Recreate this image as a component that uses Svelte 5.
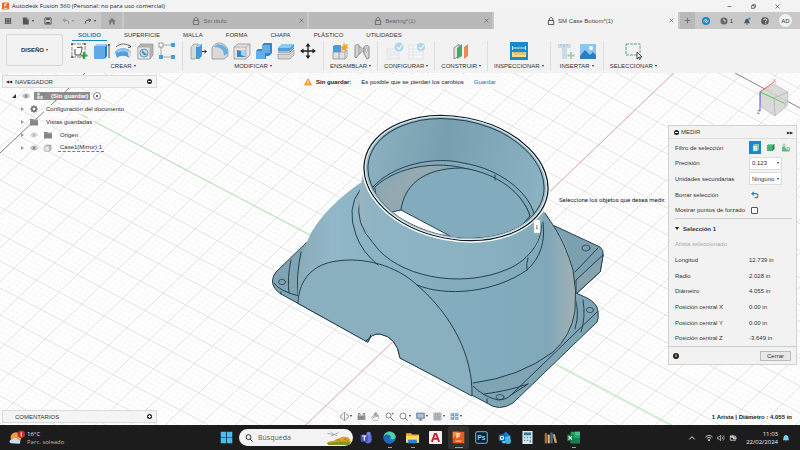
<script>
  const ribbonTabs = ['SOLIDO', 'SUPERFICIE', 'MALLA', 'FORMA', 'CHAPA', 'PLÁSTICO', 'UTILIDADES'];

  const icons = {
    sketch: '<rect x="2" y="2" width="13" height="13" fill="#fff" stroke="#666" stroke-width=".8" stroke-dasharray="4 1"/><path d="M5 13V7M5 13H10C12 10 12 7 12 5L7 5.500" fill="none" stroke="#444"/><circle cx="2" cy="2" r="1" fill="#555"/><circle cx="15" cy="2" r="1" fill="#555"/><circle cx="2" cy="15" r="1" fill="#555"/><path d="M14 10v7M10.500 13.500h7" stroke="#2aa34a" stroke-width="2"/>',
    extrude: '<path d="M2 5l2-3h11l-2 3z" fill="#9bcdf3"/><rect x="2" y="4" width="11" height="13" rx="1" fill="#5fa9e6"/><path d="M13 5l2-3v12l-2 3z" fill="#2f79bd"/><path d="M17 16V2M16 4l1-2 1 2" stroke="#333" fill="none" stroke-width=".8"/>',
    revolve: '<path d="M1 10C4 5 14 5 17 10l-2 6c-3-3-9-3-12 0z" fill="#4d9edc"/><path d="M1 10C4 5 14 5 17 10l-3 1c-3-2-7-2-10 0z" fill="#8cc6ef"/><path d="M2 5C6 1 13 1 17 5M15 2.500l2 2.500-3 .5" stroke="#444" fill="none" stroke-width=".8"/><ellipse cx="15.500" cy="12" rx="1.500" ry="3" fill="#d8d8d8"/>',
    hole: '<path d="M2 5l3-3h12v11l-3 4H2z" fill="#b5b5b5" stroke="#888" stroke-width=".6"/><rect x="2" y="5" width="12" height="12" rx="1" fill="#e2e2e2" stroke="#999" stroke-width=".6"/><circle cx="8" cy="11" r="4" fill="#b9ddf6" stroke="#54788e" stroke-width=".7"/><path d="M6 8a4 4 0 005 5z" fill="#3489ca"/>',
    pattern: '<path d="M3 3h12M3 3v12h12" stroke="#999" stroke-width=".8" fill="none"/><rect x="1" y="1" width="4" height="4" fill="#fff" stroke="#777" stroke-width=".7"/><g fill="#4c9bd8"><rect x="13" y="1" width="4" height="4"/><rect x="1" y="13" width="4" height="4"/><rect x="13" y="13" width="4" height="4"/></g>',
    press: '<path d="M2 5l3-3h4v11l-3 4H2z" fill="#d9d9d9" stroke="#888" stroke-width=".6"/><path d="M7 5l3-3h3v12l-3 3H7z" fill="#459ada"/><path d="M7 5l3-3h3l-3 3z" fill="#9cd0f4"/><path d="M13 9.500h4M15.500 8l2 1.500-2 1.500" stroke="#333" fill="none"/>',
    fillet: '<path d="M1 17V7C1 4 5 1 8 1c5 0 9 4 9 9v4l-4 3z" fill="#d9d9d9" stroke="#888" stroke-width=".7"/><path d="M5 3c7-2 12 3 12 8l-4 3c0-6-3-9-10-9z" fill="#67afe4"/>',
    shell: '<path d="M1 5l4-3h12v11l-4 4H1z" fill="#e3e3e3" stroke="#888" stroke-width=".7"/><path d="M4 8h9v7H4z" fill="#a8d4f2"/><path d="M4 8l4 1v4l5 2H4z" fill="#3388ca"/><path d="M13 5l4-3M1 5h12v12" fill="none" stroke="#999" stroke-width=".6"/>',
    combine: '<path d="M7 3l2-2h8v10l-3 3h-3v3H1V9l2-2h4z" fill="#3386cb"/><path d="M7 3h8v8h-5v6H1V9h6z" fill="#64aee5"/>',
    split: '<path d="M1 6l4-4h12v3l-4 4H1z" fill="#4f9fde"/><path d="M1 6l4-4h12l-4 4z" fill="#8fc8f1"/><path d="M1 12h12l4-4v5l-4 4H1z" fill="#d4d4d4" stroke="#888" stroke-width=".6"/><path d="M1 10h12l4-4" fill="none" stroke="#777"/>',
    move: '<path d="M9 2v14M2 9h14" stroke="#222" stroke-width="1.300"/><path d="M9 1l2.500 3.500h-5zM9 17l2.500-3.500h-5zM1 9l3.500-2.500v5zM17 9l-3.500-2.500v5z" fill="#222"/>',
    newcomp: '<path d="M2 10h12v7H2z" fill="#e0e0e0" stroke="#888" stroke-width=".7"/><path d="M2 4l2-1h6v7H2z" fill="#4c9bdc"/><path d="M8 10v7M14 10l2-2v7l-2 2" stroke="#888" fill="none" stroke-width=".7"/><path d="M13 0l1 3 3-1-1 3 2 1-3 1v3l-2-2-3 1 1-3-2-1 3-1z" fill="#efa82d"/>',
    joint: '<path d="M2 4c1-2 4-2 4 0v8l-3 4-1-1z" fill="#d3d6d8" stroke="#777" stroke-width=".8"/><path d="M6 5h2v6l-2 1M11 6h-1v4h1" fill="none" stroke="#777" stroke-width=".8"/><path d="M11 5c1-2 5-2 5 0v11l-2 1-3-5z" fill="#d3d6d8" stroke="#777" stroke-width=".8"/><ellipse cx="13.500" cy="8" rx="1" ry="2" fill="#fff" stroke="#888" stroke-width=".6"/>',
    config: '<g opacity=".45"><path d="M1 7h12v10H1zM3 10h8M3 13h8" fill="#eee" stroke="#d0d3d6"/><circle cx="13" cy="5" r="4.500" fill="#61b3de"/><path d="M11 5l2 2 3-4" stroke="#fff" fill="none" stroke-width="1.200"/></g>',
    configTable: '<g opacity=".45"><path d="M1 3h14v14H1zM1 7h14M1 10h14M1 13h14M5 3v14" fill="#fff" stroke="#d3d6d8"/><circle cx="13" cy="5" r="4" fill="#61b3de"/><path d="M11 5l2 2 3-4" stroke="#fff" fill="none" stroke-width="1.200"/></g>',
    plane: '<path d="M2 6l5-4v12l-5 3z" fill="#e8e8e8" stroke="#777" stroke-width=".8"/><path d="M5 6l5-4v12l-5 3z" fill="#45a96b"/><path d="M12 5l4-3v12l-4 3z" fill="#ee8957"/>',
    measure: '<rect width="18" height="18" fill="#188bcf"/><rect x="2" y="10" width="14" height="5" fill="#fbdb8b"/><path d="M4 10v2M6 10v3M8 10v2M10 10v3M12 10v2M14 10v3" stroke="#987b38" stroke-width=".6"/><path d="M2.500 4v4M15.500 4v4M3 6h12" stroke="#fff" stroke-width=".8"/>',
    insert: '<path d="M1 2h13v4h-4v11H5V6H1z" fill="#cbdce6"/><path d="M4 2v2M7 2v3M10 2v2" stroke="#a5bac6"/><path d="M14 10v7M10.500 13.500h7" stroke="#a8cda9" stroke-width="1.800"/>',
    picture: '<rect x="1" y="2" width="16" height="15" fill="#8bc6f1"/><circle cx="12" cy="6" r="2" fill="#fff"/><path d="M1 14l5-6 5 5 3-3 3 3v4H1z" fill="#2680c2"/>',
    select: '<rect x="2" y="2" width="14" height="11" fill="none" stroke="#57a980" stroke-dasharray="3 1"/><path d="M13 10l5 5h-2.500l1 2-1 .6-1-2.200L13 17z" fill="#fff" stroke="#222" stroke-width=".8"/>',
    apps: '<g fill="#555"><path d="M2 2h4v4H2zM7 2h4v4H7zM12 2h4v4h-4zM2 7h4v4H2zM7 7h4v4H7zM12 7h4v4h-4zM2 12h4v4H2zM7 12h4v4H7zM12 12h4v4h-4z"/></g>',
    file: '<path d="M2 1h9l4 4v12H2z" fill="#555"/><path d="M11 1v4h4" fill="none" stroke="#ccc"/>',
    save: '<path d="M2 2h14v14H2z" fill="none" stroke="#555" stroke-width="2"/><path d="M5 2h8v5H5zM5 11h8v5H5z" fill="#555"/>',
    undo: '<path d="M7 3L3 7l4 4M3 7h6c5 0 6 4 6 8" fill="none" stroke="#888" stroke-width="2.200"/>',
    redo: '<path d="M11 3l4 4-4 4M15 7H9c-5 0-6 4-6 8" fill="none" stroke="#444" stroke-width="2.200"/>',
    home: '<path d="M1 9l8-7 8 7-2 1v7h-4v-5H7v5H3v-7z" fill="#777"/>',
    lock: '<path d="M5 8V5c0-5 8-5 8 0v3" fill="none" stroke="currentColor" stroke-width="2"/><path d="M3 8h12v9H3z" fill="none" stroke="currentColor" stroke-width="2"/>',
    close: '<path d="M4 4l10 10M14 4L4 14" stroke="#555" stroke-width="1.500"/>',
    plus: '<path d="M9 2v14M2 9h14" stroke="#777" stroke-width="3"/>',
    ext: '<circle cx="9" cy="9" r="9" fill="#1689ca"/><path d="M5 8l3-3 2 2M13 10l-3 3-2-2M7 11l4-4M4 10l2-2M14 8l-2 2" stroke="#fff" stroke-width="2" fill="none"/>',
    clock: '<circle cx="9" cy="9" r="8" fill="#666"/><path d="M9 4v5h4" stroke="#eee" stroke-width="2" fill="none"/>',
    bell: '<path d="M2 14c3-2 2-10 7-10s4 8 7 10zM7 15h4v2H7z" fill="#555"/><circle cx="14" cy="4" r="3" fill="#37a4d8"/>',
    help: '<circle cx="9" cy="9" r="8.500" fill="#555"/><path d="M6 7c0-4 7-4 7 0 0 2-3 2-3 5M10 13v2" stroke="#fff" stroke-width="2" fill="none"/>',
    eye: '<path d="M1 9c4-6 12-6 16 0-4 6-12 6-16 0z" fill="#eee" stroke="#888" stroke-width="1.500"/><circle cx="9" cy="9" r="3.500" fill="#888"/>',
    gear: '<circle cx="9" cy="9" r="5" fill="none" stroke="#666" stroke-width="3.500"/><path d="M9 0v4M9 14v4M0 9h4M14 9h4M3 3l3 3M12 12l3 3M15 3l-3 3M3 15l3-3" stroke="#666" stroke-width="2"/>',
    folder: '<path d="M0 2h7l2 2h9v13H0z" fill="#858585"/><path d="M0 6h18" stroke="#aaa"/>',
    body: '<path d="M2 5l4-3h10v11l-4 3H2z" fill="#b6bec8" stroke="#888"/><path d="M2 5h10v11H2z" fill="#e9edf3" stroke="#999"/>',
    assembly: '<path d="M2 1h7v7h7v9H2z" fill="#ddd" stroke="#777"/><path d="M2 8h7v9M9 8l3-3h6v6" fill="none" stroke="#777"/>',
    orbit: '<path d="M9 1v16M6 3l3-3 3 3M6 15l3 3 3-3" stroke="#777" fill="none" stroke-width="1.500"/><path d="M5 5c-6 2-6 6 0 8M13 5c6 2 6 6 0 8" stroke="#777" fill="none" stroke-width="2"/>',
    look: '<path d="M1 7h16v9H1z" fill="#999"/><path d="M3 7V3h3v4M12 7V3h3v4M4 9v5M8 9v5M12 9v5" stroke="#666" fill="none" stroke-width="1.500"/>',
    pan: '<path d="M5 17L1 10l2-1 3 3V4l2-1v6-7l2-1v8-7l2 1v7l1-4 2 1v6l-3 5z" fill="#fff" stroke="#777"/>',
    zoom: '<circle cx="7" cy="7" r="5" fill="#fff" stroke="#666" stroke-width="1.500"/><path d="M11 11l6 6" stroke="#666" stroke-width="2"/><path d="M15 1v5M13 3h5" stroke="#666"/>',
    zoomFit: '<circle cx="8" cy="8" r="6" fill="#fff" stroke="#666" stroke-width="1.500"/><path d="M12 12l5 5" stroke="#666" stroke-width="2"/>',
    display: '<path d="M1 2h16v11H1z" fill="#8099b5" stroke="#607080"/><path d="M3 4h12v7H3z" fill="#a9c2de"/><path d="M9 13v3M5 16h8" stroke="#777" stroke-width="2"/>',
    grid: '<path d="M1 1h16v16H1z" fill="#b8bdc3"/><path d="M1 5h16M1 9h16M1 13h16M5 1v16M9 1v16M13 1v16" stroke="#9aa1a8"/>',
    views: '<path d="M1 2h16v14H1z" fill="#8fb3da"/><path d="M9 2v14M1 9h16" stroke="#fff" stroke-width="2"/><path d="M8 2v14M1 8h16" stroke="#617488"/>',
    windows: '<path d="M1 1h7.500v7.500H1zM9.500 1H17v7.500H9.500zM1 9.500h7.500V17H1zM9.500 9.500H17V17H9.500z" fill="#43bff4"/>',
    teams: '<circle cx="12" cy="4" r="3" fill="#7e87ee"/><path d="M7 6h9v8c-2 4-7 4-9 1z" fill="#6670df"/><rect x="1" y="5" width="10" height="10" rx="1" fill="#4b53bc"/><path d="M3 7h6M6 7v6" stroke="#fff" stroke-width="1.500"/>',
    edge: '<circle cx="9" cy="9" r="8.500" fill="#147ecf"/><path d="M1 8C2-2 17-1 17.500 8c0 4-6 4-7 2 2-4-5-6-9-2z" fill="#4dd49c"/><path d="M1 8c3-5 9-3 9 0-3 0-3 7 4 7C8 21 0 15 1 8z" fill="#2463b0"/>',
    explorer: '<path d="M0 3h7l2 2h9v11H0z" fill="#efb12f"/><path d="M0 7h18v9H0z" fill="#ffd968"/><path d="M3 12h12v5H3z" fill="#2389d8"/>',
    autocad: '<rect width="18" height="18" rx="1" fill="#f2ecec"/><path d="M4 15L8 4h2l4 11M6 11h6" fill="none" stroke="#bc2631" stroke-width="2.500"/>',
    fusion: '<path d="M1 1h16v16H1z" fill="#e95c18"/><path d="M1 1h9l-9 9z" fill="#ff8a3a"/><path d="M7 10V4h5M7 7h4" stroke="#fff" stroke-width="1.700" fill="none"/><path d="M5 14h8" stroke="#ffd0ac" stroke-width="1.500"/>',
    ps: '<rect x="1" y="1" width="16" height="16" rx="2" fill="#032139" stroke="#9bcced" stroke-width="1.200"/><text x="3.500" y="12.500" font-family="Liberation Sans" font-weight="bold" font-size="9" fill="#9bd4fa">Ps</text>',
    outlook: '<path d="M5 6l6-5 6 6v9H5z" fill="#1581d2"/><path d="M6 9l11-2v10H6z" fill="#51c4f4"/><rect x="1" y="5" width="9" height="9" rx="1" fill="#0869b8"/><circle cx="5.500" cy="9.500" r="2.300" fill="none" stroke="#fff" stroke-width="1.500"/><circle cx="14" cy="14" r="4" fill="#48b2cf"/>',
    calc: '<rect x="2" y="0" width="14" height="18" fill="#dce8ef"/><path d="M4 2h10v4H4z" fill="#317899"/><path d="M4 8h2v2H4zM8 8h2v2H8zM12 8h2v2h-2zM4 12h2v2H4zM8 12h2v2H8zM12 12h2v4h-2z" fill="#568fac"/>',
    books: '<path d="M1 3h3v14H1z" fill="#b07438"/><path d="M5 5h3v12H5z" fill="#e6b970"/><path d="M9 2h3v15H9z" fill="#4775a0"/><path d="M12 5l3-1 3 12-3 1z" fill="#d8a25c"/>',
    excel: '<path d="M5 1h13v16H5z" fill="#22a268"/><path d="M11 1h7v5h-7z" fill="#3dc58a"/><path d="M5 10h13v7H5z" fill="#17824e"/><rect x="0" y="5" width="9" height="9" rx="1" fill="#127641"/><path d="M2 7l5 5M7 7l-5 5" stroke="#fff" stroke-width="1.500"/>',
    chevron: '<path d="M3 12l6-6 6 6" stroke="#fff" fill="none" stroke-width="2"/>',
    wifi: '<path d="M1 7c5-5 11-5 16 0M4 10c3-3 7-3 10 0M7 13h4l-2 3z" stroke="#ddd" fill="none" stroke-width="2"/>',
    volume: '<path d="M1 7h3l4-4v12l-4-4H1zM11 6c2 2 2 4 0 6M13 3c4 4 4 8 0 12" stroke="#ddd" fill="none" stroke-width="1.500"/>',
    battery: '<path d="M3 5h12v9H3zM16 8v3M7 2v7M4 3v4h5V3" stroke="#ddd" fill="none" stroke-width="1.800"/><path d="M9 7h4v5H9z" fill="#ddd"/>',
    alert: '<path d="M2 14c2-2 0-12 7-12s5 10 7 12zM7 15h4l-2 2z" fill="#80cff2"/>',
    warn: '<path d="M9 1l8 15H1z" fill="#f3a023" stroke="#c7841c"/><path d="M9 6v5M9 12v2" stroke="#fff" stroke-width="2"/>',
    filterFace: '<path d="M4 4l3-2h9v11l-3 3H4z" fill="#8ac4ac"/><path d="M4 5h9v11H4z" fill="#d8eee0" stroke="#75b495"/>',
    filterBody: '<path d="M2 5l4-3h11v10l-4 4H2z" fill="#28834f"/><path d="M2 5h11v11H2z" fill="#42b773"/><path d="M2 5l4-3h11l-4 3z" fill="#87d2a2"/>',
    filterComp: '<path d="M2 8h6v3h9v6H2z" fill="#60b880"/><path d="M4 2h4v6H4z" fill="#e0e5e1" stroke="#8d9c91"/><path d="M8 11l3-2h6v6" fill="#c6e2ce" stroke="#789a80"/>',
    reset: '<path d="M6 2L2 6l4 4M2 6h9c6 0 6 9 0 9H8" fill="none" stroke="#2785c7" stroke-width="2.500"/>'
  };

  const groups = [
    { label: 'CREAR', tools: ['sketch', 'extrude', 'revolve', 'hole', 'pattern'] },
    { label: 'MODIFICAR', tools: ['press', 'fillet', 'shell', 'combine', 'split', 'move'] },
    { label: 'ENSAMBLAR', tools: ['newcomp', 'joint'] },
    { label: 'CONFIGURAR', tools: ['config', 'configTable'] },
    { label: 'CONSTRUIR', tools: ['plane'] },
    { label: 'INSPECCIONAR', tools: ['measure'] },
    { label: 'INSERTAR', tools: ['insert', 'picture'] },
    { label: 'SELECCIONAR', tools: ['select'] }
  ];

  const documents = [
    { name: 'Sin título', active: false },
    { name: 'Bearing*(1)', active: false },
    { name: 'SM Case Bottom*(1)', active: true }
  ];

  const treeItems = [
    { icon: 'gear', name: 'Configuración del documento' },
    { icon: 'folder', name: 'Vistas guardadas' },
    { icon: 'folder', name: 'Origen', eye: true, hidden: true },
    { icon: 'body', name: 'Case1(Mirror):1', eye: true, edited: true }
  ];

  const results = [
    ['Longitud', '12.739 in'],
    ['Radio', '2.028 in'],
    ['Diámetro', '4.055 in'],
    ['Posición central X', '0.00 in'],
    ['Posición central Y', '0.00 in'],
    ['Posición central Z', '-3.649 in']
  ];

  const viewTools = [
    { icon: 'orbit', menu: true }, { icon: 'look' }, { icon: 'pan' }, { icon: 'zoom' },
    { icon: 'zoomFit', menu: true }, { icon: 'display', menu: true }, { icon: 'grid', menu: true }, { icon: 'views', menu: true }
  ];

  const apps = ['teams', 'edge', 'explorer', 'autocad', 'fusion', 'ps', 'outlook', 'calc', 'books', 'excel'];
  const running = ['edge', 'explorer', 'excel'];

  // Ground grid: two families of parallel lines, every fifth one is a major line.
  const falling = [];
  const rising = [];
  for (let i = -120; i <= 120; i++) {
    const y = 72 + i * 5.4;
    falling.push({ y1: y, y2: y + 422, major: i % 5 === 0 });
    const x = 718 + i * 7;
    rising.push({ x1: x - 418, x2: x, major: i % 5 === 0 });
  }
</script>

{#snippet icon(name)}
  <svg class="icon" viewBox="0 0 18 18" aria-hidden="true">{@html icons[name]}</svg>
{/snippet}

<div class="window">
  <header class="titlebar">
    <svg class="logo" viewBox="0 0 18 18" aria-hidden="true"><rect width="18" height="18" rx="2" fill="#e9681d" /><path d="M7 11V3h6M7 7h5M4 15h10" stroke="#fff" stroke-width="2" fill="none" /></svg>
    <h1>Autodesk Fusion 360 (Personal: no para uso comercial)</h1>
    <div class="winbuttons">
      <button aria-label="Minimizar"><svg class="icon" viewBox="0 0 18 18"><path d="M2 9h14" stroke="#222" stroke-width="2" /></svg></button>
      <button aria-label="Restaurar"><svg class="icon" viewBox="0 0 18 18"><path d="M2 6h10v10H2zM6 6V2h10v10h-4" fill="none" stroke="#222" stroke-width="2" /></svg></button>
      <button aria-label="Cerrar ventana"><svg class="icon" viewBox="0 0 18 18"><path d="M2 2l14 14M16 2L2 16" stroke="#222" stroke-width="2" /></svg></button>
    </div>
  </header>

  <nav class="docbar" aria-label="Documentos">
    <div class="quick">
      <button aria-label="Panel de datos">{@render icon('apps')}</button>
      <button aria-label="Archivo">{@render icon('file')}<i class="caret"></i></button>
      <button aria-label="Guardar">{@render icon('save')}</button>
      <button aria-label="Deshacer">{@render icon('undo')}<i class="caret dim"></i></button>
      <button aria-label="Rehacer">{@render icon('redo')}<i class="caret"></i></button>
    </div>
    <button class="hometab" aria-label="Inicio">{@render icon('home')}</button>
    <div class="doctabs">
      {#each documents as doc}
        <div class="doctab" class:active={doc.active}>
          <button class="docname">{@render icon('lock')}<span>{doc.name}</span></button>
          <button class="docclose" aria-label="Cerrar {doc.name}">{@render icon('close')}</button>
        </div>
      {/each}
    </div>
    <button class="newtab" aria-label="Nuevo diseño">{@render icon('plus')}</button>
    <div class="account">
      <button aria-label="Extensiones">{@render icon('ext')}</button>
      <button aria-label="Trabajos">{@render icon('clock')}<span>1</span></button>
      <button aria-label="Notificaciones">{@render icon('bell')}</button>
      <button aria-label="Ayuda">{@render icon('help')}</button>
      <button class="avatar">AD</button>
    </div>
  </nav>

  <section class="ribbon">
    <button class="workspace">DISEÑO<i class="caret"></i></button>
    <div class="ribbonmain">
      <div class="ribbontabs">
        {#each ribbonTabs as tab, i}
          <button class:current={i === 0}>{tab}</button>
        {/each}
      </div>
      <div class="groups">
        {#each groups as group}
          <div class="group">
            <div class="tools">
              {#each group.tools as tool}
                <button aria-label={tool}>{@render icon(tool)}</button>
              {/each}
            </div>
            <button class="grouplabel">{group.label}<i class="caret"></i></button>
          </div>
        {/each}
      </div>
    </div>
  </section>

  <main class="canvas">
    <svg class="scene" viewBox="0 73 800 352" preserveAspectRatio="xMidYMid slice" aria-label="Modelo SM Case Bottom">
      <defs>
        <linearGradient id="body" x1="0" x2="1" y1="0" y2="0">
          <stop offset="0" stop-color="#8cabb9" /><stop offset=".12" stop-color="#91b7c8" /><stop offset=".5" stop-color="#84aec0" /><stop offset=".9" stop-color="#80a8b9" /><stop offset="1" stop-color="#a3b0b3" />
        </linearGradient>
        <linearGradient id="wall" x1="0" x2="1">
          <stop offset="0" stop-color="#9fb3ba" /><stop offset=".06" stop-color="#8eb4c4" /><stop offset=".5" stop-color="#8bb3c3" /><stop offset=".95" stop-color="#84abbc" /><stop offset="1" stop-color="#a5b2b5" />
        </linearGradient>
        <linearGradient id="inside" x1="0" x2="1">
          <stop offset="0" stop-color="#8bb0bf" /><stop offset=".4" stop-color="#789fb0" /><stop offset="1" stop-color="#8ab2c3" />
        </linearGradient>
        <linearGradient id="floor" x1="0" x2="1" y1="0" y2=".6">
          <stop offset="0" stop-color="#7fa6b6" /><stop offset=".25" stop-color="#96a9b0" /><stop offset=".5" stop-color="#81a8b8" /><stop offset="1" stop-color="#8db7c8" />
        </linearGradient>
        <clipPath id="rimclip"><ellipse cx="456" cy="178" rx="89" ry="58" transform="rotate(11 456 178)" /></clipPath>
      </defs>
      <rect x="0" y="73" width="800" height="352" fill="#fff" />
      {#each falling as line}
        <line x1="0" x2="800" y1={line.y1} y2={line.y2} class:major={line.major} class="gridline" />
      {/each}
      {#each rising as line}
        <line x1={line.x1} x2={line.x2} y1="430" y2="30" class:major={line.major} class="gridline" />
      {/each}
      <path d="M82 115L672 425" stroke="#a5e3a5" stroke-width=".8" />
      <path d="M306 425L674 73" stroke="#e3a0a4" stroke-width=".8" />
      <path d="M0 153L85 73M735 73L800 108" stroke="#666" stroke-width=".8" />

      <g stroke="#24414e" stroke-width="1" stroke-linejoin="round" stroke-linecap="round" fill="none">
        <path d="M545 222L557 227L600 247Q604 250 603 255L600 272L576 294L550 280Z" fill="#7ba1b1" />
        <path d="M603 255L576 280L576 294L600 272Z" fill="#88a3ad" />
        <path d="M598 248L575 272" />
        <path d="M306 243L276 272Q270 280 274 287Q277 292 281 294L368 342Q371 333 380 334Q397 337 400 358L487 403Q499 412 513 403L597 322Q599 318 598 311Q597 303 587 298L576 293L540 260Z" fill="#7fa5b5" />
        <path d="M274 283Q279 291 299 296M281 292v2" />
        <path d="M473 386Q484 397 498 400Q506 400 511 395L597 312M487 399v4M511 395L528 384M484 394Q508 391 528 384" />
        <path d="M291 260Q287 278 289 293M301 252Q296 275 298 296M583 300Q586 317 581 332M573 293Q581 310 575 329" />
        <path d="M360 183Q326 207 311 233Q296 261 298 303L368 342Q371 333 380 334Q397 337 400 358L472 396L473 383Q520 376 557 350Q572 334 576 311Q577 288 573 270Q566 238 555 228L545 213Z" fill="url(#body)" stroke="none" />
        <path d="M545 213L555 228Q566 246 573 270Q577 290 575 311Q571 336 553 352Q520 377 473 383" />
        <path d="M298 303C299 278 314 264 337 261C363 257 396 265 417 285C452 315 473 356 472 396L400 358Q397 337 380 334Q371 333 368 342Z" fill="#8ab0bf" />
        <path d="M366 341Q371 338 371 335" stroke="#122b36" />
        <path d="M360 190Q346 208 356 235Q362 252 378 265M417 285C446 297 494 293 527 270Q547 252 543 222M527 270Q526 263 528 258" />
        <path d="M360 200Q354 223 374 244C396 276 460 290 508 269C530 260 544 238 541 222" fill="url(#wall)" />
        <path d="M364 167L359 195Q357 235 402 263C455 291 529 271 539 237L548 190Q545 230 475 241C420 240 366 211 364 167Z" fill="url(#wall)" stroke="none" />
        <ellipse cx="456" cy="178" rx="93.500" ry="61.600" transform="rotate(11 456 178)" fill="#9cb9c4" stroke="#fff" stroke-width="3" />
        <ellipse cx="456" cy="178" rx="93" ry="61" transform="rotate(11 456 178)" stroke="#101d24" stroke-width="1.300" />
        <ellipse cx="456" cy="178" rx="91.500" ry="60" transform="rotate(11 456 178)" stroke="#dce9ee" stroke-width="1" />
        <ellipse cx="456" cy="178" rx="89" ry="58" transform="rotate(11 456 178)" fill="url(#inside)" />
        <g clip-path="url(#rimclip)">
          <path d="M373 187C393 164 436 156 463 163C501 169 529 193 534 214L500 250H385Z" fill="#83aaba" />
          <path d="M375 187C399 164 441 162 463 168C495 174 523 193 530 216L500 250H385Z" fill="url(#floor)" />
          <path d="M401 210C404 187 421 168 462 168C499 173 523 194 530 216L500 250H420Z" fill="#82acbd" />
          <path d="M392 212L401 210L450 236L430 233Q407 226 392 212Z" fill="#fff" />
          <path d="M495 175v5" />
        </g>
        <g stroke-width=".8">
          <ellipse cx="282" cy="282" rx="3.500" ry="2.700" /><ellipse cx="586" cy="248" rx="4" ry="3" />
          <ellipse cx="590" cy="310" rx="3.500" ry="2.700" /><ellipse cx="500" cy="397" rx="4" ry="2.500" />
        </g>
      </g>
      <rect x="534" y="220" width="6" height="13" fill="#fff" stroke="#ccc" stroke-width=".5" />
      <text x="535" y="229" class="tag">1</text>

      <g class="cube">
        <path d="M760 92L774 84L788 92L787 106L775 116L761 107Z" fill="#d4d4d4" stroke="#aaa" stroke-width=".6" opacity=".85" />
        <path d="M760 92L774 98L788 92M774 98L775 116" fill="none" stroke="#aaa" stroke-width=".6" />
        <path d="M760 92L774 82" stroke="#ee6666" stroke-width="1" /><path d="M760 92L784 103" stroke="#62cf62" stroke-width="1" /><path d="M760 92V111" stroke="#5555dd" stroke-width="1" />
        <text x="773" y="83" fill="#e66">X</text><text x="783" y="106" fill="#5c5">Y</text><text x="757" y="114" fill="#55d">Z</text>
      </g>
      <text x="559" y="202" class="prompt">Seleccione los objetos que desea medir.</text>
    </svg>

    <aside class="browser">
      <div class="bar"><span class="arrows">◀◀</span><h2>NAVEGADOR</h2><i class="dot minus"></i></div>
      <ul class="tree">
        <li class="root"><i class="opened"></i>{@render icon('eye')}<span class="rootname">{@render icon('assembly')}<b>(Sin guardar)</b></span><i class="radiodot"></i></li>
        {#each treeItems as item}
          <li><i class="closed"></i>{#if item.eye}<span class:faded={item.hidden}>{@render icon('eye')}</span>{/if}{@render icon(item.icon)}<span class="itemname" class:edited={item.edited}>{item.name}</span></li>
        {/each}
      </ul>
    </aside>

    <div class="notice">{@render icon('warn')}<b>Sin guardar:</b><span>Es posible que se pierdan los cambios</span><a href="#guardar">Guardar</a></div>

    <section class="measure">
      <header><i class="dot minus"></i><h2>MEDIR</h2><span class="arrows">▶▶</span></header>
      <div class="settings">
        <div class="field"><span>Filtro de selección</span>
          <div class="filters">
            <button class="on" aria-label="Seleccionar cara">{@render icon('filterFace')}</button>
            <button aria-label="Seleccionar cuerpo">{@render icon('filterBody')}</button>
            <button aria-label="Seleccionar componente">{@render icon('filterComp')}</button>
          </div>
        </div>
        <div class="field"><label for="precision">Precisión</label><div class="pick"><select id="precision"><option>0.123</option></select><i class="caret"></i></div></div>
        <div class="field"><label for="units">Unidades secundarias</label><div class="pick"><select id="units"><option>Ninguno</option></select><i class="caret"></i></div></div>
        <div class="field"><span>Borrar selección</span><button class="inset" aria-label="Borrar selección">{@render icon('reset')}</button></div>
        <div class="field"><label for="snap">Mostrar puntos de forzado</label><input class="inset" id="snap" type="checkbox" /></div>
      </div>
      <div class="results">
        <h3><i class="opened down"></i>Selección 1</h3>
        <p>Arista seleccionado</p>
        <dl>
          {#each results as [name, value]}
            <div class="field"><dt>{name}</dt><dd>{value}</dd></div>
          {/each}
        </dl>
      </div>
      <footer><i class="dot info">i</i><button>Cerrar</button></footer>
    </section>

    <div class="comments bar"><h2>COMENTARIOS</h2><i class="dot plusdot"></i></div>
    <div class="viewbar">
      {#each viewTools as tool}
        <button aria-label={tool.icon}>{@render icon(tool.icon)}{#if tool.menu}<i class="caret"></i>{/if}</button>
      {/each}
    </div>
    <output class="status">1 Arista | Diámetro : 4.055 in</output>
  </main>

  <footer class="taskbar">
    <button class="weather">
      <svg viewBox="0 0 30 30" aria-hidden="true"><circle cx="13" cy="14" r="10" fill="#f49b32" /><path d="M4 25c-5-1-3-9 2-7 3-6 10-3 10 0 7-1 6 8 2 8z" fill="#c5ddfa" /><circle cx="23" cy="8" r="7" fill="#c62b2d" /><path d="M23 4v8" stroke="#fff" stroke-width="2" /></svg>
      <span>16°C<br /><em>Parc. soleado</em></span>
    </button>
    <div class="center">
      <button class="start" aria-label="Inicio">{@render icon('windows')}</button>
      <label class="search">
        <svg class="icon" viewBox="0 0 18 18" aria-hidden="true"><circle cx="8" cy="7" r="5.500" fill="none" stroke="#222" stroke-width="2" /><path d="M11 11l6 6" stroke="#222" stroke-width="2" /></svg>
        <input type="text" placeholder="Búsqueda" aria-label="Búsqueda" />
        <svg class="art" viewBox="0 0 72 45" aria-hidden="true"><path d="M0 39c10-8 15-3 23-8 7-7 14-3 19-9 7-3 13 0 18-2 8 3 12 10 11 20L66 45H4z" fill="#d6a91e" /><path d="M0 39q30-6 70-4l-5 10H4z" fill="#83952b" /><path d="M30 34l5-7 5 7M50 31l5-6 6 8" stroke="#8a6715" stroke-width="2" fill="none" /><path d="M1 10l20 4 14-6M12 18l10-4 8 3M20 13l-8-8" stroke="#98a6ad" stroke-width="2.500" fill="none" /></svg>
      </label>
      {#each apps as app}
        <button class="app" class:running={running.includes(app)} class:focused={app === 'fusion'} aria-label={app}>{@render icon(app)}</button>
      {/each}
    </div>
    <div class="tray">
      <button aria-label="Iconos ocultos">{@render icon('chevron')}</button>
      <button class="sys" aria-label="Red, volumen y batería">{@render icon('wifi')}{@render icon('volume')}{@render icon('battery')}</button>
      <time datetime="2024-02-22T11:03">11:03<br />22/02/2024</time>
      <button class="alerts" aria-label="Notificaciones de Windows">{@render icon('alert')}</button>
    </div>
  </footer>
</div>

<style>
  :global(body) { margin: 0; }
  .window { display: flex; flex-direction: column; min-height: 100vh; overflow: hidden; background: #f2f2f2; color: #333; font: 6px/8px "Liberation Sans", Arial, sans-serif; }
  button { display: flex; align-items: center; justify-content: center; padding: 0; border: 0; background: none; color: inherit; font: inherit; }
  h1, h2, h3, p, ul, dl, dd { margin: 0; padding: 0; font: inherit; }
  .icon { display: block; flex: none; width: 8px; height: 8px; }
  .caret { flex: none; width: 0; height: 0; margin-left: 2px; border: 1px solid transparent; border-top: 2px solid #333; border-bottom: 0; }
  .caret.dim { border-top-color: #888; }

  .titlebar { display: flex; align-items: center; height: 12px; padding: 0 20px 0 2px; gap: 3px; background: #f3f3f3; color: #222; }
  .titlebar h1 { flex: 1; font-family: "Open Sans", "Noto Sans", sans-serif; font-size: 6px; }
  .logo { width: 7px; height: 8px; }
  .winbuttons { display: flex; gap: 19px; }
  .winbuttons .icon { width: 5px; height: 5px; }

  .docbar { display: flex; height: 17px; background: #c8c8c8; }
  .quick { display: flex; align-items: center; gap: 10px; padding: 0 5px 0 4px; }
  .hometab { width: 21px; background: #bababa; }
  .doctabs { display: flex; flex: 1; gap: 2px; padding: 0 2px; }
  .doctab { display: flex; flex: 1; background: #b9b9b9; color: #666; }
  .doctab.active { background: #f2f2f2; color: #444; }
  .docname { flex: 1; gap: 3px; }
  .docclose { width: 12px; }
  .docclose .icon { width: 7px; height: 7px; }
  .newtab { width: 15px; background: #b9b9b9; }
  .newtab .icon { width: 7px; height: 7px; }
  .account { display: flex; align-items: center; gap: 10px; padding: 0 8px 0 7px; }
  .account button { gap: 2px; }
  .account .avatar { width: 13px; height: 13px; border-radius: 50%; background: #f2f2f2; }

  .ribbon { display: flex; height: 44px; background: #f2f2f2; }
  .workspace { width: 57px; margin: 5px 1px 7px 6px; border: 1px solid #d9d9d9; border-radius: 2px; font-weight: bold; }
  .ribbonmain { flex: 1; }
  .ribbontabs { display: flex; gap: 11px; height: 12px; padding-left: 8px; }
  .ribbontabs button { padding: 0 6px; border-bottom: 1px solid transparent; box-sizing: border-box; }
  .ribbontabs .current { border-bottom-color: #1787c4; color: #1787c4; font-weight: bold; }
  .groups { display: flex; }
  .group { display: flex; flex-direction: column; align-items: center; gap: 1px; padding: 0 6px; border-right: 1px solid #dcdcdc; }
  .group:last-child { border: 0; }
  .tools { display: flex; gap: 4px; padding-top: 1px; }
  .tools .icon { width: 18px; height: 18px; }
  .grouplabel { white-space: nowrap; height: 10px; }

  .canvas { position: relative; flex: 1; min-height: 352px; overflow: hidden; }
  .scene { position: absolute; inset: 0; width: 100%; height: 100%; }
  .gridline { stroke: #ececec; stroke-width: 0.6; stroke-dasharray: 2 1; }
  .gridline.major { stroke: #cfcfcf; stroke-dasharray: none; }
  .tag { font: 7px "Liberation Serif", serif; fill: #222; }
  .cube text { font: 5px "Liberation Sans", sans-serif; }
  .prompt { font: 6px Roboto, "Noto Sans", sans-serif; fill: #222; }

  .browser { position: absolute; top: 2px; left: 2px; width: 155px; }
  .bar { display: flex; align-items: center; height: 13px; box-sizing: border-box; padding: 0 4px 0 3px; border: 1px solid #dadada; background: #f4f4f4; }
  .bar h2 { flex: 1; }
  .arrows { width: 9px; font: 4px "DejaVu Sans", sans-serif; color: #222; }
  .dot { display: flex; align-items: center; justify-content: center; position: relative; width: 5px; height: 5px; border-radius: 50%; background: #222; }
  .minus::before, .plusdot::before { content: ""; width: 3px; height: 1px; background: #fff; }
  .plusdot::after { content: ""; position: absolute; top: 1px; left: 2px; width: 1px; height: 3px; background: #fff; }
  .tree { list-style: none; padding-top: 1px; }
  .tree li { display: flex; align-items: center; height: 13px; gap: 6px; padding-left: 19px; }
  .tree .root { padding-left: 10px; }
  .rootname { display: flex; align-items: center; gap: 7px; margin-left: -2px; padding: 0 2px; background: #8d8d8d; color: #fff; }
  .opened { border: 2px solid transparent; border-right-color: #333; border-bottom-color: #333; }
  .closed { width: 0; height: 0; border: 2px solid transparent; border-left: 3px solid #999; border-right: 0; }
  .radiodot { width: 2px; height: 2px; margin-left: -2px; border: 2px solid #fff; border-radius: 50%; outline: 1px solid #888; background: #335; }
  .faded { opacity: 0.6; }
  .itemname { padding: 0 2px; background: #f8f8f8; }
  .itemname.edited { border-bottom: 1px dashed #777; }

  .notice { position: absolute; top: 1px; left: 299px; display: flex; align-items: center; gap: 10px; height: 15px; padding: 0 7px 0 5px; background: #fafafa; color: #222; white-space: nowrap; }
  .notice .icon { margin-right: -6px; }
  .notice a { color: #1477b8; text-decoration: none; }

  .measure { position: absolute; top: 52px; right: 3px; width: 129px; border: 1px solid #d2d2d2; box-sizing: border-box; background: #f2f2f2; }
  .measure header { display: flex; align-items: center; gap: 2px; height: 12px; padding: 0 0 0 5px; border-bottom: 1px solid #ddd; }
  .measure header h2 { flex: 1; }
  .field { display: flex; align-items: center; }
  .field > :first-child { flex: 1; }
  .field > :last-child { flex: none; width: 43px; }
  .settings { display: grid; grid-auto-rows: 1fr; height: 78px; margin: 0 4px 0 6px; padding-top: 1px; border-bottom: 1px solid #ccc; }
  .filters { display: flex; gap: 3px; }
  .filters button { width: 12px; height: 13px; }
  .filters .on { background: #1787cf; }
  .filters .icon { width: 9px; height: 9px; }
  .pick { display: flex; align-items: center; position: relative; }
  .pick select { appearance: none; width: 33px; height: 13px; padding: 0 0 0 2px; border: 1px solid #ddd; border-radius: 0; background: #fff; color: #333; font: inherit; }
  .pick .caret { position: absolute; left: 28px; margin: 0; }
  .field > .inset { box-sizing: border-box; width: 8px; height: 8px; margin: 0 33px 0 2px; }
  .field > input.inset { appearance: none; width: 7px; height: 7px; margin-right: 34px; border: 1px solid #555; border-radius: 1px; background: #fff; }
  .results { display: grid; grid-template-rows: 1fr 1fr 6fr; height: 125px; padding: 2px 4px 0 6px; border-bottom: 1px solid #ccc; }
  .results h3 { display: flex; align-items: center; gap: 4px; font-weight: bold; }
  .results p { display: flex; align-items: center; color: #aaa; }
  .results dl { display: grid; grid-auto-rows: 1fr; }
  .opened.down { border: 2px solid transparent; border-top: 3px solid #222; border-bottom: 0; }
  .measure footer { display: flex; align-items: center; justify-content: space-between; height: 17px; padding: 0 5px 0 4px; }
  .measure footer button { width: 31px; height: 10px; border: 1px solid #bbb; background: #e8e8e8; }
  .info { color: #fff; width: 6px; height: 6px; font: bold 5px/6px "Liberation Serif", serif; }

  .comments { position: absolute; left: 2px; bottom: 2px; width: 155px; padding-left: 12px; }
  .viewbar { position: absolute; left: 338px; bottom: 2px; display: flex; align-items: center; gap: 5px; height: 14px; padding: 0 2px; background: #f7f7f7; }
  .viewbar .icon { width: 9px; height: 9px; }
  .viewbar .caret { margin-left: 1px; }
  .status { position: absolute; right: 8px; bottom: 4px; color: #222; font-weight: bold; }

  .taskbar { display: grid; grid-template-columns: 1fr auto 1fr; align-items: center; height: 25px; background: #1c1c1c; color: #eee; font-family: "Open Sans", "Noto Sans", sans-serif; }
  .weather { justify-content: flex-start; gap: 2px; padding-left: 9px; text-align: left; }
  .weather svg { width: 16px; height: 16px; }
  .weather em { font-style: normal; color: #bbb; }
  .center { display: flex; align-items: center; padding-left: 2px; }
  .start { width: 18px; height: 23px; margin-right: 4px; }
  .center .start .icon, .app .icon { width: 13px; height: 13px; }
  .search { display: flex; align-items: center; width: 114px; height: 17px; box-sizing: border-box; margin-right: 2px; padding: 0 2px 0 6px; border-radius: 9px; background: #f3f3f3; }
  .search input { flex: 1; min-width: 0; margin-left: 5px; padding: 0; border: 0; background: none; font: 7px/9px "Open Sans", "Noto Sans", sans-serif; }
  .search input::placeholder { color: #555; opacity: 1; }
  .art { width: 24px; height: 15px; }
  .app { position: relative; width: 21px; height: 23px; margin: 0 1px; border-radius: 2px; }
  .app.focused { background: #303030; }
  .app.running::after, .app.focused::after { content: ""; position: absolute; bottom: 1px; width: 4px; height: 1px; background: #999; }
  .app.focused::after { width: 8px; background: #4cb8ea; }
  .tray { display: flex; align-items: center; justify-content: flex-end; gap: 9px; padding-right: 10px; }
  .tray time { text-align: right; margin-right: -5px; }
  .sys { gap: 4px; }
</style>
